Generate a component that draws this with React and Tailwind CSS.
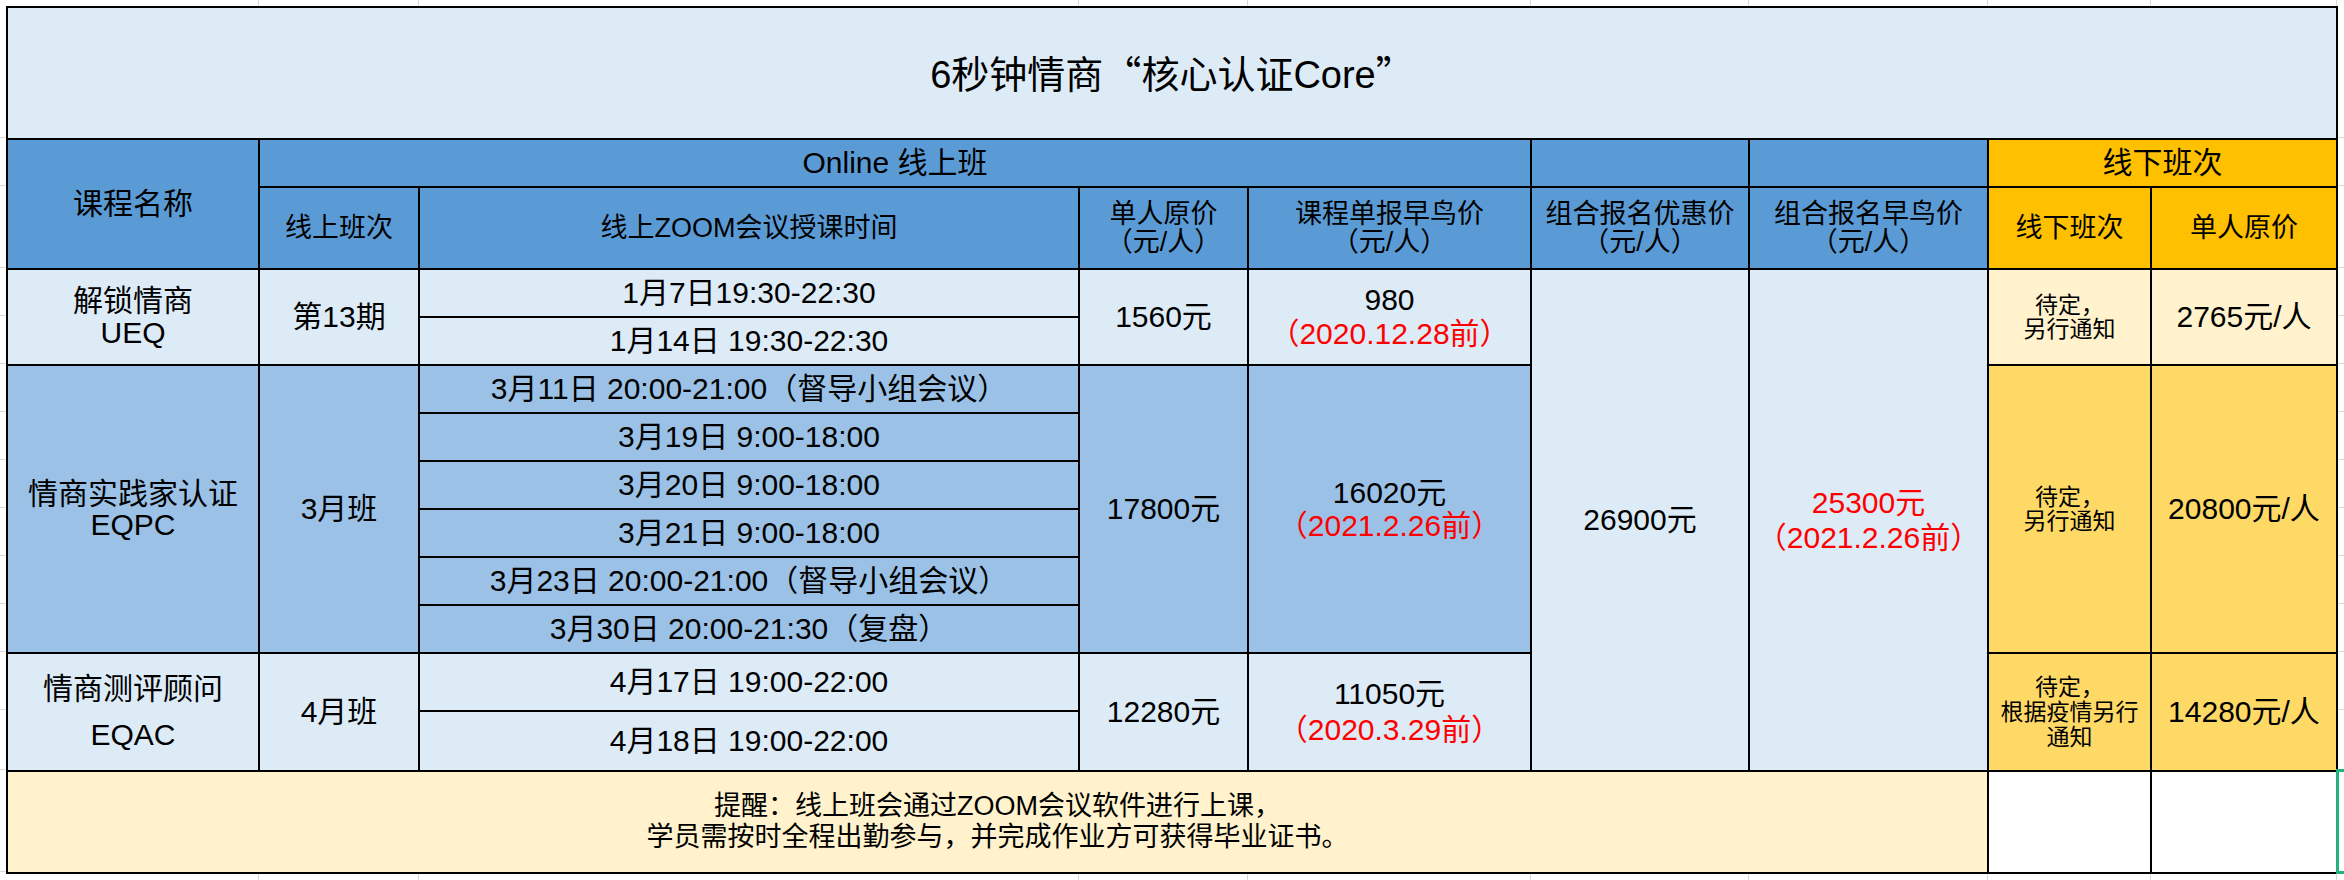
const font = "font-['Liberation_Sans','Noto_Sans_CJK_SC',sans-serif]";

const colLines = [259, 160, 660, 169, 283, 218, 239, 163, 186];
const rowLines = [132, 48, 82, 48, 48, 48, 48, 48, 48, 48, 48, 58, 60, 102];

const Cell = ({ className = "", children }) => (
  <div className={`flex items-center justify-center text-center text-black ${className}`}>
    <div>{children}</div>
  </div>
);

const Red = ({ children }) => <span className="text-[#ff0000]">{children}</span>;

const HStrip = () => (
  <div className="flex h-[6px] bg-white">
    {colLines.map((w, i) => (
      <div key={i} className="h-full border-r border-[#d9d9d9]" style={{ width: w }} />
    ))}
    <div className="flex-1" />
  </div>
);

const VStrip = () => (
  <div className="flex w-[6px] flex-col bg-white">
    {rowLines.map((h, i) => (
      <div key={i} className="w-full border-b border-[#d9d9d9]" style={{ height: h }} />
    ))}
    <div className="flex-1" />
  </div>
);

export default function App() {
  const light = "bg-[#ddebf7]";
  const blue = "bg-[#5b9bd5]";
  const mid = "bg-[#9bc2e6]";

  return (
    <div className={`relative flex h-[880px] w-[2344px] flex-col bg-white ${font}`}>
      <HStrip />
      <div className="flex">
        <VStrip />
        <div className="grid grid-cols-[250px_158px_658px_167px_281px_216px_237px_161px_184px] grid-rows-[130px_46px_80px_46px_46px_46px_46px_46px_46px_46px_46px_56px_58px_100px] gap-[2px] bg-black p-[2px] text-[30px] leading-[32px]">
          {/* title */}
          <Cell className={`col-start-1 col-span-9 row-start-1 ${light} text-[38px] leading-[40px]`}>
            6秒钟情商<span className="font-['Noto_Sans_CJK_SC',sans-serif]">“</span>核心认证Core
            <span className="font-['Noto_Sans_CJK_SC',sans-serif]">”</span>
          </Cell>

          {/* header row 1 */}
          <Cell className={`col-start-1 row-start-2 row-span-2 ${blue}`}>课程名称</Cell>
          <Cell className={`col-start-2 col-span-4 row-start-2 ${blue}`}>Online 线上班</Cell>
          <Cell className={`col-start-6 row-start-2 ${blue}`} />
          <Cell className={`col-start-7 row-start-2 ${blue}`} />
          <Cell className="col-start-8 col-span-2 row-start-2 bg-[#ffc000]">线下班次</Cell>

          {/* header row 2 */}
          <Cell className={`col-start-2 row-start-3 ${blue} text-[27px] leading-[28px]`}>线上班次</Cell>
          <Cell className={`col-start-3 row-start-3 ${blue} text-[27px] leading-[28px]`}>线上ZOOM会议授课时间</Cell>
          <Cell className={`col-start-4 row-start-3 ${blue} text-[27px] leading-[28px]`}>
            单人原价
            <br />
            （元/人）
          </Cell>
          <Cell className={`col-start-5 row-start-3 ${blue} text-[27px] leading-[28px]`}>
            课程单报早鸟价
            <br />
            （元/人）
          </Cell>
          <Cell className={`col-start-6 row-start-3 ${blue} text-[27px] leading-[28px]`}>
            组合报名优惠价
            <br />
            （元/人）
          </Cell>
          <Cell className={`col-start-7 row-start-3 ${blue} text-[27px] leading-[28px]`}>
            组合报名早鸟价
            <br />
            （元/人）
          </Cell>
          <Cell className="col-start-8 row-start-3 bg-[#ffc000] text-[27px] leading-[28px]">线下班次</Cell>
          <Cell className="col-start-9 row-start-3 bg-[#ffc000] text-[27px] leading-[28px]">单人原价</Cell>

          {/* UEQ */}
          <Cell className={`col-start-1 row-start-4 row-span-2 ${light}`}>
            解锁情商
            <br />
            UEQ
          </Cell>
          <Cell className={`col-start-2 row-start-4 row-span-2 ${light}`}>第13期</Cell>
          <Cell className={`col-start-3 row-start-4 ${light}`}>1月7日19:30-22:30</Cell>
          <Cell className={`col-start-3 row-start-5 ${light}`}>1月14日 19:30-22:30</Cell>
          <Cell className={`col-start-4 row-start-4 row-span-2 ${light}`}>1560元</Cell>
          <Cell className={`col-start-5 row-start-4 row-span-2 ${light} leading-[34px]`}>
            980
            <br />
            <Red>（2020.12.28前）</Red>
          </Cell>
          <Cell className={`col-start-6 row-start-4 row-span-10 ${light}`}>26900元</Cell>
          <Cell className={`col-start-7 row-start-4 row-span-10 ${light} leading-[35px]`}>
            <Red>
              25300元
              <br />
              （2021.2.26前）
            </Red>
          </Cell>
          <Cell className="col-start-8 row-start-4 row-span-2 bg-[#fff2cc] text-[23px] leading-[24px]">
            待定，
            <br />
            另行通知
          </Cell>
          <Cell className="col-start-9 row-start-4 row-span-2 bg-[#fff2cc]">2765元/人</Cell>

          {/* EQPC */}
          <Cell className={`col-start-1 row-start-6 row-span-6 ${mid} leading-[31px]`}>
            情商实践家认证
            <br />
            EQPC
          </Cell>
          <Cell className={`col-start-2 row-start-6 row-span-6 ${mid}`}>3月班</Cell>
          <Cell className={`col-start-3 row-start-6 ${mid}`}>3月11日 20:00-21:00（督导小组会议）</Cell>
          <Cell className={`col-start-3 row-start-7 ${mid}`}>3月19日 9:00-18:00</Cell>
          <Cell className={`col-start-3 row-start-8 ${mid}`}>3月20日 9:00-18:00</Cell>
          <Cell className={`col-start-3 row-start-9 ${mid}`}>3月21日 9:00-18:00</Cell>
          <Cell className={`col-start-3 row-start-10 ${mid}`}>3月23日 20:00-21:00（督导小组会议）</Cell>
          <Cell className={`col-start-3 row-start-11 ${mid}`}>3月30日 20:00-21:30（复盘）</Cell>
          <Cell className={`col-start-4 row-start-6 row-span-6 ${mid}`}>17800元</Cell>
          <Cell className={`col-start-5 row-start-6 row-span-6 ${mid} leading-[33px]`}>
            16020元
            <br />
            <Red>（2021.2.26前）</Red>
          </Cell>
          <Cell className="col-start-8 row-start-6 row-span-6 bg-[#ffd966] text-[23px] leading-[24px]">
            待定，
            <br />
            另行通知
          </Cell>
          <Cell className="col-start-9 row-start-6 row-span-6 bg-[#ffd966]">20800元/人</Cell>

          {/* EQAC */}
          <Cell className={`col-start-1 row-start-12 row-span-2 ${light} leading-[46px]`}>
            情商测评顾问
            <br />
            EQAC
          </Cell>
          <Cell className={`col-start-2 row-start-12 row-span-2 ${light}`}>4月班</Cell>
          <Cell className={`col-start-3 row-start-12 ${light}`}>4月17日 19:00-22:00</Cell>
          <Cell className={`col-start-3 row-start-13 ${light}`}>4月18日 19:00-22:00</Cell>
          <Cell className={`col-start-4 row-start-12 row-span-2 ${light}`}>12280元</Cell>
          <Cell className={`col-start-5 row-start-12 row-span-2 ${light} leading-[36px]`}>
            11050元
            <br />
            <Red>（2020.3.29前）</Red>
          </Cell>
          <Cell className="col-start-8 row-start-12 row-span-2 bg-[#ffd966] text-[23px] leading-[25px]">
            待定，
            <br />
            根据疫情另行
            <br />
            通知
          </Cell>
          <Cell className="col-start-9 row-start-12 row-span-2 bg-[#ffd966]">14280元/人</Cell>

          {/* footer */}
          <Cell className="col-start-1 col-span-7 row-start-14 bg-[#fff2cc] text-[27px] leading-[31px]">
            提醒：线上班会通过ZOOM会议软件进行上课，
            <br />
            学员需按时全程出勤参与，并完成作业方可获得毕业证书。
          </Cell>
          <Cell className="col-start-8 row-start-14 bg-white" />
          <Cell className="col-start-9 row-start-14 bg-white" />
        </div>
        <VStrip />
      </div>
      <HStrip />

      {/* selected cell marker */}
      <div className="absolute left-[2336px] top-[769px] h-[105px] w-[8px] border-y-[3px] border-l-[3px] border-[#21b47a]" />
    </div>
  );
}
